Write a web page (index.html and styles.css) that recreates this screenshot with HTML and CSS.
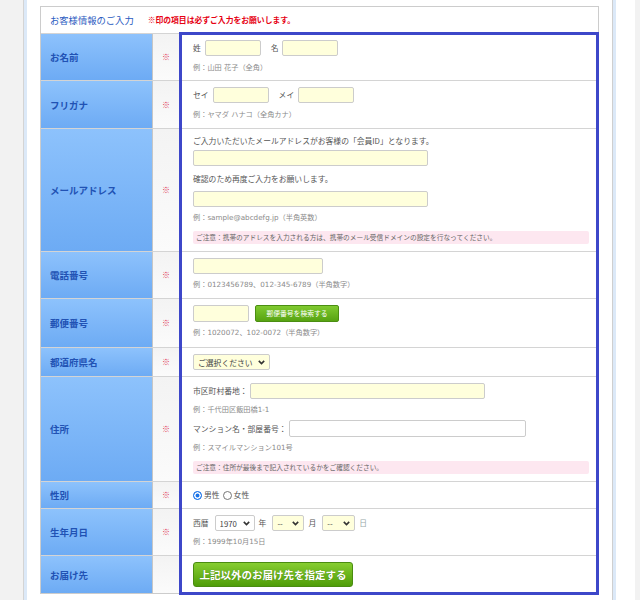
FILE: index.html
```html
<!DOCTYPE html>
<html lang="ja">
<head>
<meta charset="utf-8">
<title>お客様情報のご入力</title>
<link rel="stylesheet" href="styles.css">
</head>
<body>
<div class="page">
  <div class="frame">
    <div class="inner">
      <div class="form">
        <div class="form-head">
          <span class="form-title">お客様情報のご入力</span>
          <span class="form-req">※印の項目は必ずご入力をお願いします。</span>
        </div>

        <div class="row">
          <div class="lbl">お名前</div>
          <div class="ast">※</div>
          <div class="val pb6">
            <div class="line">
              <span class="cap">姓</span><input class="inp w56 ml4" type="text">
              <span class="cap ml10">名</span><input class="inp w56 ml3" type="text">
            </div>
            <div class="note mt6">例：山田 花子（全角）</div>
          </div>
        </div>

        <div class="row">
          <div class="lbl">フリガナ</div>
          <div class="ast">※</div>
          <div class="val">
            <div class="line">
              <span class="cap">セイ</span><input class="inp w56 ml4" type="text">
              <span class="cap ml10">メイ</span><input class="inp w56 ml4" type="text">
            </div>
            <div class="note mt6">例：ヤマダ ハナコ（全角カナ）</div>
          </div>
        </div>

        <div class="row">
          <div class="lbl">メールアドレス</div>
          <div class="ast">※</div>
          <div class="val">
            <div class="lead">ご入力いただいたメールアドレスがお客様の「会員ID」となります。</div>
            <input class="inp w235 mt3" type="text">
            <div class="lead mt7">確認のため再度ご入力をお願いします。</div>
            <input class="inp w235 mt6" type="text">
            <div class="note mt5">例：sample@abcdefg.jp（半角英数）</div>
            <div class="alert mt7">ご注意：携帯のアドレスを入力される方は、携帯のメール受信ドメインの設定を行なってください。</div>
          </div>
        </div>

        <div class="row">
          <div class="lbl">電話番号</div>
          <div class="ast">※</div>
          <div class="val">
            <input class="inp w130" type="text">
            <div class="note mt5">例：0123456789、012-345-6789（半角数字）</div>
          </div>
        </div>

        <div class="row">
          <div class="lbl">郵便番号</div>
          <div class="ast">※</div>
          <div class="val pb8">
            <div class="line h17">
              <input class="inp w56 h17" type="text">
              <button class="btn-s" type="button">郵便番号を検索する</button>
            </div>
            <div class="note mt5">例：1020072、102-0072（半角数字）</div>
          </div>
        </div>

        <div class="row">
          <div class="lbl">都道府県名</div>
          <div class="ast">※</div>
          <div class="val pb6">
            <span class="sel">
              <select class="yel w77"><option>ご選択ください</option></select>
              <svg class="chev" width="7" height="5" viewBox="0 0 7 5"><path d="M0.8 0.9 L3.5 3.6 L6.2 0.9" fill="none" stroke="#333" stroke-width="1.6"/></svg>
            </span>
          </div>
        </div>

        <div class="row">
          <div class="lbl">住所</div>
          <div class="ast">※</div>
          <div class="val">
            <div class="line">
              <span class="cap">市区町村番地：</span><input class="inp w235 ml2" type="text">
            </div>
            <div class="note mt5">例：千代田区飯田橋1-1</div>
            <div class="line mt4 h17">
              <span class="cap">マンション名・部屋番号：</span><input class="inp white w237 h17 ml2" type="text">
            </div>
            <div class="note mt5">例：スマイルマンション101号</div>
            <div class="alert mt7">ご注意：住所が最後まで記入されているかをご確認ください。</div>
          </div>
        </div>

        <div class="row">
          <div class="lbl">性別</div>
          <div class="ast">※</div>
          <div class="val radios">
            <label class="opt"><input type="radio" name="sex" checked><span>男性</span></label>
            <label class="opt ml3"><input type="radio" name="sex"><span>女性</span></label>
          </div>
        </div>

        <div class="row">
          <div class="lbl">生年月日</div>
          <div class="ast">※</div>
          <div class="val">
            <div class="line">
              <span class="cap">西暦</span>
              <span class="sel ml6">
                <select class="w40"><option>1970</option></select>
                <svg class="chev" width="7" height="5" viewBox="0 0 7 5"><path d="M0.8 0.9 L3.5 3.6 L6.2 0.9" fill="none" stroke="#333" stroke-width="1.6"/></svg>
              </span>
              <span class="cap ml4">年</span>
              <span class="sel ml6">
                <select class="yel w32"><option>--</option></select>
                <svg class="chev" width="7" height="5" viewBox="0 0 7 5"><path d="M0.8 0.9 L3.5 3.6 L6.2 0.9" fill="none" stroke="#333" stroke-width="1.6"/></svg>
              </span>
              <span class="cap ml4">月</span>
              <span class="sel ml6">
                <select class="yel w33"><option>--</option></select>
                <svg class="chev" width="7" height="5" viewBox="0 0 7 5"><path d="M0.8 0.9 L3.5 3.6 L6.2 0.9" fill="none" stroke="#333" stroke-width="1.6"/></svg>
              </span>
              <span class="cap ml4 faint">日</span>
            </div>
            <div class="note mt5">例：1999年10月15日</div>
          </div>
        </div>

        <div class="row">
          <div class="lbl">お届け先</div>
          <div class="ast"></div>
          <div class="val pb6">
            <button class="btn-l" type="button">上記以外のお届け先を指定する</button>
          </div>
        </div>

        <div class="hl"></div>
      </div>
    </div>
  </div>
</div>
</body>
</html>
```

FILE: styles.css
```css
* { box-sizing: border-box; }
html, body { margin: 0; padding: 0; }
body {
  background: #f2f2f2;
  font-family: "Noto Sans CJK JP", "Noto Sans", sans-serif;
  color: #555;
}
.page {
  margin-left: 23px;
  width: 612px;
  min-height: 600px;
  background: #fff;
  border-left: 1px solid #d4d4d4;
}
.frame {
  width: 592px;
  min-height: 600px;
  border-left: 3px solid #dce9f8;
  border-right: 3px solid #dce9f8;
}
.inner {
  min-height: 600px;
  border-right: 1px solid #cfcfcf;
  padding: 6px 0 0 13px;
}
.form {
  position: relative;
  width: 559px;
  border: 1px solid #cccccc;
}
.form-head {
  height: 26px;
  display: flex;
  align-items: center;
  padding-left: 9px;
}
.form-title { font-size: 9.3px; line-height: 12px; color: #2a5bbf; }
.form-req { font-size: 7.8px; line-height: 12px; font-weight: bold; color: #e60012; margin-left: 14px; }

.row {
  display: grid;
  grid-template-columns: 112px 27px 1fr;
  border-top: 1px solid #d4d4d4;
}
.lbl {
  background: linear-gradient(#8dc2fc, #6dabf4);
  border-right: 1px solid #c6c6c6;
  display: flex;
  align-items: center;
  padding-left: 9px;
  font-size: 9.5px;
  line-height: 12px;
  font-weight: bold;
  color: #2152b4;
}
.ast {
  background: linear-gradient(#f3f3f3, #fbfbfb);
  border-right: 1px solid #dddddd;
  display: flex;
  align-items: center;
  justify-content: center;
  font-size: 8px;
  line-height: 12px;
  color: #e0304f;
}
.val {
  padding: 6px 9px 7px 13px;
  display: flex;
  flex-direction: column;
  align-items: flex-start;
}
.val.pb6 { padding-bottom: 6px; }
.val.pb8 { padding-bottom: 8px; }
.line { display: flex; align-items: center; height: 16px; }
.h17 { height: 17px; }
.cap { font-size: 7.8px; color: #555; line-height: 12px; white-space: nowrap; }
.faint { color: #9aa; }
.lead { font-size: 7.8px; color: #555; line-height: 12px; white-space: nowrap; }
.note {
  font-family: "DejaVu Sans", "Noto Sans CJK JP", sans-serif;
  font-size: 7.2px;
  color: #8a8a8a;
  line-height: 12px;
  white-space: nowrap;
}
.alert {
  align-self: stretch;
  height: 13px;
  background: #fde7f0;
  border-radius: 2px;
  font-size: 6.7px;
  line-height: 13px;
  padding-left: 3px;
  color: #666;
  white-space: nowrap;
}
.inp {
  height: 16px;
  margin: 0;
  padding: 0 3px;
  border: 1px solid #cccccc;
  border-radius: 2px;
  background: #ffffdc;
  font: inherit;
  font-size: 8px;
}
.inp.white { background: #fff; }
.inp.h17 { height: 17px; }
.w56 { width: 56px; }
.w130 { width: 130px; }
.w235 { width: 235px; }
.w237 { width: 237px; }
.w77 { width: 77px; }
.w40 { width: 40px; }
.w32 { width: 32px; }
.w33 { width: 33px; }
.ml2 { margin-left: 2px; }
.ml3 { margin-left: 3px; }
.ml4 { margin-left: 4px; }
.ml6 { margin-left: 6px; }
.ml10 { margin-left: 10px; }
.mt3 { margin-top: 3px; }
.mt4 { margin-top: 4px; }
.mt5 { margin-top: 5px; }
.mt6 { margin-top: 6px; }
.mt7 { margin-top: 7px; }

.btn-s {
  width: 84px;
  height: 17px;
  margin: 0 0 0 6px;
  padding: 0;
  border: 1px solid #4b8e12;
  border-radius: 2px;
  background: linear-gradient(#80ca30, #57a312);
  color: #fff;
  font-family: inherit;
  font-size: 6.8px;
  line-height: 15px;
}
.btn-l {
  width: 160px;
  height: 25px;
  margin: 0;
  padding: 0;
  border: 1px solid #4a8c10;
  border-radius: 3px;
  background: linear-gradient(#86cd30, #4f9d08);
  color: #fff;
  font-family: inherit;
  font-size: 10.5px;
  line-height: 23px;
  font-weight: bold;
  text-shadow: 0 0 1px rgba(0,0,0,0.35);
}

.sel { position: relative; display: inline-flex; }
.sel select {
  appearance: none;
  -webkit-appearance: none;
  height: 16px;
  margin: 0;
  padding: 0 12px 0 4px;
  border: 1px solid #cccccc;
  border-radius: 2px;
  background: #fff;
  font-family: inherit;
  font-size: 7.8px;
  color: #444;
}
.sel select.yel { background: #ffffdc; }
.chev { position: absolute; right: 5px; top: 6px; pointer-events: none; }

.radios { flex-direction: row; align-items: center; padding-top: 7px; padding-bottom: 7px; }
.opt { display: inline-flex; align-items: center; font-size: 7.8px; color: #555; line-height: 12px; }
.opt input {
  appearance: none;
  -webkit-appearance: none;
  width: 9px;
  height: 9px;
  margin: 0 2px 0 0;
  border: 1px solid #767676;
  border-radius: 50%;
  background: #fff;
}
.opt input:checked {
  border-color: #1a73e8;
  background: #1a73e8;
  box-shadow: inset 0 0 0 1.5px #fff;
}

.hl {
  position: absolute;
  left: 138px;
  top: 25px;
  width: 420px;
  height: 563px;
  border: 3px solid #3d47c9;
  pointer-events: none;
}
```
